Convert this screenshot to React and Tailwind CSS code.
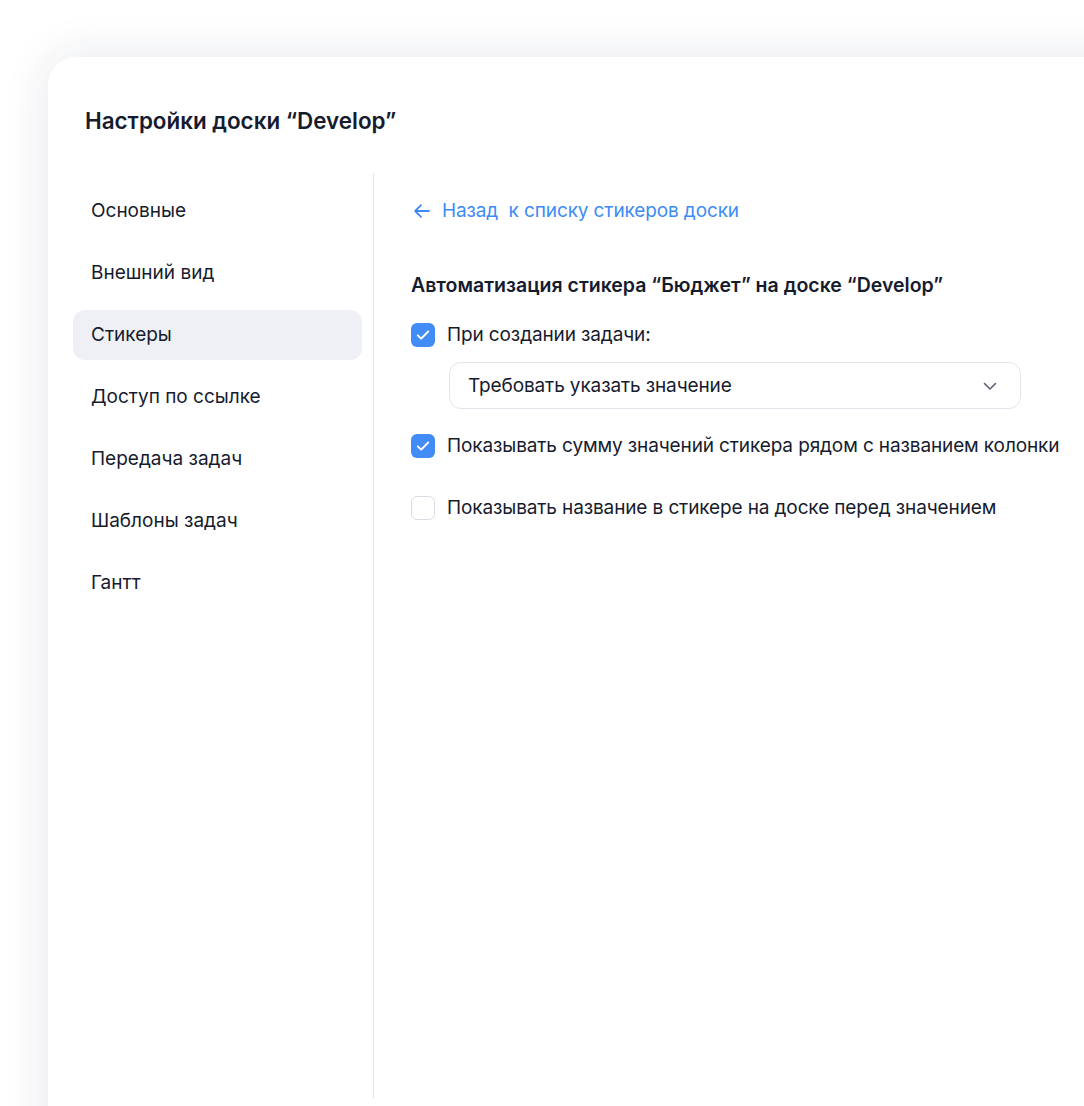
import { useState } from "react";

const menu = [
  "Основные",
  "Внешний вид",
  "Стикеры",
  "Доступ по ссылке",
  "Передача задач",
  "Шаблоны задач",
  "Гантт",
];

const Check = ({ checked }) =>
  checked ? (
    <span className="flex h-6 w-6 shrink-0 items-center justify-center rounded-[6px] bg-[#418cf6]">
      <svg width="24" height="24" viewBox="0 0 24 24" fill="none">
        <path d="M6.8 12.3l3.4 3.4 7-7.2" stroke="white" strokeWidth="1.9" strokeLinecap="round" strokeLinejoin="round" />
      </svg>
    </span>
  ) : (
    <span className="h-6 w-6 shrink-0 rounded-[6px] border-[1.5px] border-[#d9dce4] bg-white" />
  );

export default function App() {
  const [active] = useState(2);

  return (
    <div
      className="h-[1106px] w-[1084px] overflow-hidden bg-white pl-12 pt-[57px] text-[#161b2e]"
      style={{ fontFamily: "Inter, 'Noto Sans', sans-serif" }}
    >
      <div className="h-[1200px] w-[1100px] rounded-tl-[28px] bg-white shadow-[0_0_48px_rgba(30,40,70,0.11)]">
        {/* Header */}
        <h1 className="px-[37px] pt-[50px] text-[22.4px] font-semibold leading-7">
          Настройки доски “Develop”
        </h1>

        <div className="mt-[38px] flex">
          {/* Sidebar */}
          <div className="h-[925px] w-[326px] border-r border-[#e4e6ee] pl-[25px] pt-[13px]">
            <ul className="flex w-[289px] flex-col gap-3">
              {menu.map((item, i) => (
                <li
                  key={item}
                  className={
                    "flex h-[50px] items-center rounded-xl pl-[18px] text-[19px] " +
                    (i === active ? "bg-[#eff0f5]" : "")
                  }
                >
                  {item}
                </li>
              ))}
            </ul>
          </div>

          {/* Content */}
          <div className="pl-[37px] pt-[26px] text-[19px] leading-6 tracking-[-0.12px]">
            <a className="flex items-center text-[#3d8bf6]">
              <svg width="20" height="20" viewBox="0 0 20 20" fill="none" className="ml-[1px]">
                <path d="M17 10H3.5M9 4.2L3.2 10 9 15.8" stroke="currentColor" strokeWidth="1.8" strokeLinecap="round" strokeLinejoin="round" />
              </svg>
              <span className="ml-[10px]">Назад&nbsp; к списку стикеров доски</span>
            </a>

            <h2 className="mt-[50px] text-[19.5px] font-semibold tracking-normal">
              Автоматизация стикера “Бюджет” на доске “Develop”
            </h2>

            <label className="mt-[26px] flex items-center gap-3">
              <Check checked />
              <span>При создании задачи:</span>
            </label>

            <div className="ml-[38px] mt-[15px] flex h-[47px] w-[572px] items-center justify-between rounded-xl border border-[#e3e5ed] pl-[18px] pr-[22px]">
              <span>Требовать указать значение</span>
              <svg width="16" height="16" viewBox="0 0 16 16" fill="none">
                <path d="M2.5 5.5L8 11l5.5-5.5" stroke="#5b6172" strokeWidth="1.6" strokeLinecap="round" strokeLinejoin="round" />
              </svg>
            </div>

            <label className="mt-[25px] flex items-center gap-3">
              <Check checked />
              <span>Показывать сумму значений стикера рядом с названием колонки</span>
            </label>

            <label className="mt-[38px] flex items-center gap-3">
              <Check />
              <span>Показывать название в стикере на доске перед значением</span>
            </label>
          </div>
        </div>
      </div>
    </div>
  );
}
